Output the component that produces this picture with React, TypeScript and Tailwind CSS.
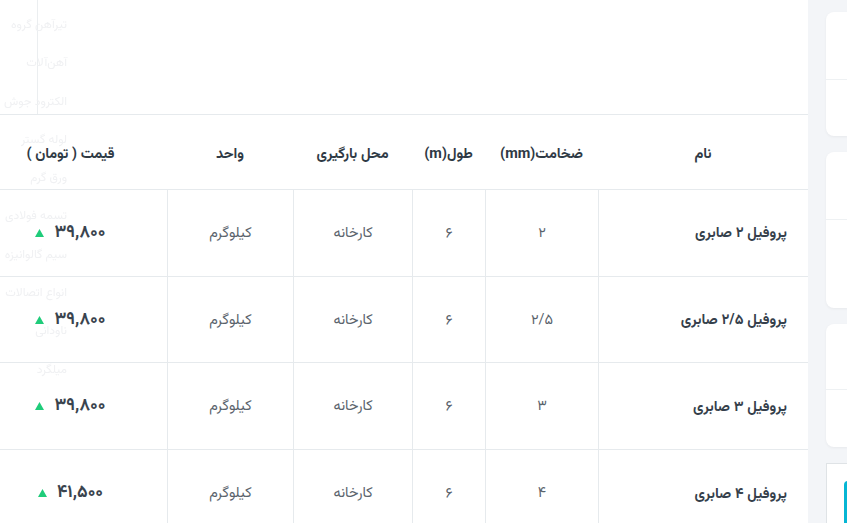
import React from "react";

interface Row {
  name: string;
  thickness: string;
  length: string;
  place: string;
  unit: string;
  price: string;
}

const rows: Row[] = [
  { name: "پروفیل ۲ صابری", thickness: "۲", length: "۶", place: "کارخانه", unit: "کیلوگرم", price: "۳۹,۸۰۰" },
  { name: "پروفیل ۲/۵ صابری", thickness: "۲/۵", length: "۶", place: "کارخانه", unit: "کیلوگرم", price: "۳۹,۸۰۰" },
  { name: "پروفیل ۳ صابری", thickness: "۳", length: "۶", place: "کارخانه", unit: "کیلوگرم", price: "۳۹,۸۰۰" },
  { name: "پروفیل ۴ صابری", thickness: "۴", length: "۶", place: "کارخانه", unit: "کیلوگرم", price: "۴۱,۵۰۰" },
];

const ghost = ["تیرآهن گروه", "آهن‌آلات", "الکترود جوش", "لوله گستر", "ورق گرم", "تسمه فولادی", "سیم گالوانیزه", "انواع اتصالات", "ناودانی", "میلگرد"];

const cols = "grid grid-cols-[210px_113px_73px_119px_126px_167px]";

export default function App() {
  return (
    <div
      className="w-[847px] h-[523px] overflow-hidden flex bg-[#f3f5f8] relative"
      style={{ fontFamily: "Vazirmatn, 'Noto Sans Arabic', 'Noto Kufi Arabic', 'Noto Naskh Arabic', 'DejaVu Sans', sans-serif" }}
    >
      {/* main panel */}
      <div className="w-[808px] shrink-0 bg-white flex flex-col">
        <div className="h-[115px] shrink-0 border-b border-[#e6eaed] flex">
          <div className="w-[38px] border-r border-[#ebeef0]" />
        </div>

        <div dir="rtl" className="flex flex-col shrink-0">
          {/* header */}
          <div className={`${cols} h-[75px] pt-[5px] border-b border-[#e6eaed] items-center text-[14.5px] font-bold text-[#2f3a45]`}>
            <div className="text-center">نام</div>
            <div className="text-center">ضخامت(mm)</div>
            <div className="text-center">طول(m)</div>
            <div className="text-center">محل بارگیری</div>
            <div className="text-center">واحد</div>
            <div className="text-center pr-[26px]">قیمت ( تومان )</div>
          </div>

          {rows.map((r, i) => (
            <div key={i} className={`${cols} h-[86.7px] border-b border-[#e6eaed] text-[14.5px] text-[#5a636c]`}>
              <div className="flex items-center pt-[3px] pr-[21px] border-l border-[#e6eaed] font-bold text-[#35404b]">{r.name}</div>
              <div className="flex items-center justify-center pt-[2px] border-l border-[#e6eaed]">{r.thickness}</div>
              <div className="flex items-center justify-center pt-[2px] border-l border-[#e6eaed]">{r.length}</div>
              <div className="flex items-center justify-center pt-[2px] border-l border-[#e6eaed]">{r.place}</div>
              <div className="flex items-center justify-center pt-[2px] border-l border-[#e6eaed]">{r.unit}</div>
              <div className="flex items-center justify-center gap-[10px] pr-[26px]">
                <span className="text-[17.5px] leading-[22px] font-bold text-[#3a444e]">{r.price}</span>
                <svg width="9" height="8" viewBox="0 0 9 8" className="shrink-0">
                  <path d="M4.5 0 L9 8 L0 8 Z" fill="#1fcc7a" />
                </svg>
              </div>
            </div>
          ))}
        </div>
      </div>

      {/* side column */}
      <div className="flex-1 pl-[18px] pt-[12px] flex flex-col gap-[16px]">
        <div className="h-[124px] shrink-0 bg-white rounded-l-lg shadow-[0_1px_3px_rgba(0,0,0,0.05)] flex flex-col">
          <div className="h-[68px] border-b border-[#eef1f3]" />
        </div>
        <div className="h-[156px] shrink-0 bg-white rounded-l-lg shadow-[0_1px_3px_rgba(0,0,0,0.05)] flex flex-col">
          <div className="h-[68px] border-b border-[#eef1f3]" />
        </div>
        <div className="h-[123px] shrink-0 bg-white rounded-l-lg shadow-[0_1px_3px_rgba(0,0,0,0.05)] flex flex-col">
          <div className="h-[66px] border-b border-[#eef1f3]" />
        </div>
        <div className="flex-1 bg-white border-l border-t border-[#dfe3e6] pl-[17px] pt-[17px]">
          <div className="w-[4px] h-full bg-[#06b6d4] rounded-tl" />
        </div>
      </div>

      {/* faint overlay text */}
      <div dir="rtl" className="absolute left-0 top-[18px] w-[67px] flex flex-col gap-[24.3px] pointer-events-none">
        {ghost.map((g, i) => (
          <div key={i} className="text-[12px] leading-[14px] text-[#f0f1f3] whitespace-nowrap text-right blur-[0.4px]">
            {g}
          </div>
        ))}
      </div>
    </div>
  );
}
